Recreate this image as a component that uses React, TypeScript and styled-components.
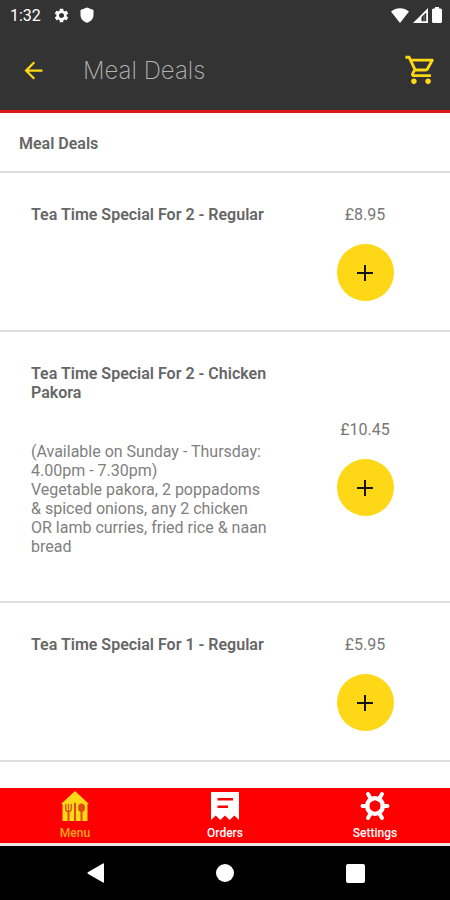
import React from "react";
import styled, { createGlobalStyle } from "styled-components";
import { MdArrowBack, MdOutlineShoppingCart, MdSettings } from "react-icons/md";

const GlobalStyle = createGlobalStyle`
  *, *::before, *::after { box-sizing: border-box; }
  body { margin: 0; background: #fff; font-family: Roboto, "Liberation Sans", sans-serif; }
  h1, h2, h3, p, ul { margin: 0; padding: 0; }
  ul { list-style: none; }
  button { border: 0; padding: 0; background: none; font: inherit; cursor: pointer; }
  svg { display: block; }
`;

const Screen = styled.div`
  min-height: 100vh;
  display: flex;
  flex-direction: column;
`;

const Header = styled.header`
  background: #333;
  border-bottom: 3px solid #dd1717;
`;

const StatusBar = styled.div`
  height: 30px;
  padding: 0 8px 0 10px;
  display: flex;
  align-items: center;
  justify-content: space-between;
  color: #fff;
  font-size: 16px;
`;

const StatusGroup = styled.div<{ $gap: number }>`
  display: flex;
  align-items: center;
  gap: ${(p) => p.$gap}px;
`;

const Clock = styled.span`
  margin-right: 2px;
`;

const AppBar = styled.div`
  height: 80px;
  padding: 0 12px 0 20px;
  display: flex;
  align-items: center;
`;

const IconButton = styled.button`
  color: #fdd817;
`;

const Title = styled.h1`
  flex: 1;
  margin-left: 36px;
  font-family: Inter, Lato, sans-serif;
  font-size: 24px;
  font-weight: 200;
  color: #b4b4b4;
`;

const Content = styled.main`
  flex: 1;
`;

const SectionTitle = styled.h2`
  padding: 21px 19px 18px;
  border-bottom: 2px solid #dedede;
  font-size: 16px;
  line-height: 19px;
  font-weight: 600;
  color: #666;
`;

const MealRow = styled.li`
  display: grid;
  grid-template-columns: 1fr 170px;
  align-items: center;
  padding: 32px 0 29px 31px;
  border-bottom: 2px solid #dedede;
`;

const MealText = styled.div`
  align-self: start;
  padding-right: 10px;
  font-size: 16px;
  line-height: 19px;
`;

const MealName = styled.h3`
  font-size: 16px;
  font-weight: 600;
  color: #666;
`;

const Description = styled.p`
  margin: 40px 0 16px;
  color: #808080;
  white-space: pre-line;
`;

const Purchase = styled.div`
  display: flex;
  flex-direction: column;
  align-items: center;
  gap: 20px;
`;

const Price = styled.span`
  font-size: 16px;
  line-height: 19px;
  color: #777;
`;

const AddButton = styled.button`
  width: 57px;
  height: 57px;
  border-radius: 50%;
  background: #fed717;
  display: grid;
  place-items: center;
`;

const TabBar = styled.nav`
  display: grid;
  grid-template-columns: repeat(3, 1fr);
  height: 58px;
  background: #f00;
  border-bottom: 3px solid #f5e4e4;
`;

const Tab = styled.button`
  display: flex;
  flex-direction: column;
  align-items: center;
  gap: 5px;
  padding-top: 3px;
  font-size: 12px;
  line-height: 14px;
`;

const TabLabel = styled.span<{ $active?: boolean }>`
  color: ${(p) => (p.$active ? "#ffa51c" : "#fff")};
  font-weight: 500;
`;

const SystemBar = styled.nav`
  height: 54px;
  padding: 0 30px;
  background: #000;
  display: grid;
  grid-template-columns: repeat(3, 1fr);
`;

const SystemButton = styled.button`
  display: grid;
  place-items: center;
`;

const ShieldIcon = () => (
  <svg width="14" height="16" viewBox="0 0 14 16" fill="#fff">
    <path d="M7 0.5 13.5 3V8C13.5 11.5 11 14.5 7 15.8 3 14.5 0.5 11.5 0.5 8V3Z" />
  </svg>
);

const WifiIcon = () => (
  <svg width="18" height="15" viewBox="0 0 18 15" fill="#fff">
    <path d="M0 3.5C5-1 13-1 18 3.5L9 15Z" />
  </svg>
);

const SignalIcon = () => (
  <svg width="15" height="15" viewBox="0 0 15 15">
    <path fill="#fff" fillRule="evenodd" d="M15 0V15H0ZM13.2 4.5 8.5 9V13.3H13.2Z" />
    <path fill="#fff" d="M10.4 8 11.8 6.6V13.3H10.4Z" opacity="0.25" />
  </svg>
);

const BatteryIcon = () => (
  <svg width="10" height="16" viewBox="0 0 10 16" fill="#fff">
    <path d="M3 0H7V1.5H8.5Q10 1.5 10 3V14.5Q10 16 8.5 16H1.5Q0 16 0 14.5V3Q0 1.5 1.5 1.5H3Z" />
  </svg>
);

const PlusIcon = () => (
  <svg width="16" height="16" viewBox="0 0 16 16" stroke="#15130a" strokeWidth="2">
    <path d="M8 0V16M0 8H16" />
  </svg>
);

const MenuIcon = () => (
  <svg width="28" height="30" viewBox="0 0 28 30">
    <path fill="#fed817" d="M14 0 28 13H26.5V30H1.5V13H0Z" />
    <g fill="none" stroke="#e04a10" strokeLinecap="round">
      <path strokeWidth="1.3" d="M4.7 13.5V18M7.5 13.5V18M10.3 13.5V18M4.7 18Q4.7 20.5 7.5 20.5 10.3 20.5 10.3 18" />
      <path strokeWidth="2" d="M7.5 20V30M14 12.5V30M20.5 20V30" />
    </g>
    <ellipse cx="20.5" cy="16.8" rx="3.4" ry="4.3" fill="#e04a10" />
  </svg>
);

const OrdersIcon = () => (
  <svg width="28" height="30" viewBox="0 0 28 30">
    <path fill="#fff" d="M0 1H28V29L23.3 24.5 18.7 29 14 24.5 9.3 29 4.7 24.5 0 29Z" />
    <path stroke="#f00" strokeWidth="2.6" d="M6.5 8.3H22M6.5 15.8H17" />
  </svg>
);

const SettingsIcon = () => (
  <svg width="30" height="30" viewBox="0 0 30 30">
    <g stroke="#fff" strokeWidth="4" strokeLinecap="round">
      <path d="M2.5 15H27.5M8 3 22 27M22 3 8 27" />
    </g>
    <circle cx="15" cy="15" r="7.8" fill="none" stroke="#fff" strokeWidth="4.6" />
    <circle cx="15" cy="15" r="5.5" fill="#f00" />
  </svg>
);

interface Meal {
  name: string;
  price: string;
  description?: string;
}

const meals: Meal[] = [
  { name: "Tea Time Special For 2 - Regular", price: "£8.95" },
  {
    name: "Tea Time Special For 2 - Chicken Pakora",
    price: "£10.45",
    description:
      "(Available on Sunday - Thursday: 4.00pm - 7.30pm)\nVegetable pakora, 2 poppadoms & spiced onions, any 2 chicken OR lamb curries, fried rice & naan bread",
  },
  { name: "Tea Time Special For 1 - Regular", price: "£5.95" },
];

const tabs = [
  { label: "Menu", Icon: MenuIcon, active: true },
  { label: "Orders", Icon: OrdersIcon, active: false },
  { label: "Settings", Icon: SettingsIcon, active: false },
];

export default function App() {
  return (
    <Screen>
      <GlobalStyle />
      <Header>
        <StatusBar>
          <StatusGroup $gap={10}>
            <Clock>1:32</Clock>
            <MdSettings size={17} />
            <ShieldIcon />
          </StatusGroup>
          <StatusGroup $gap={4}>
            <WifiIcon />
            <SignalIcon />
            <BatteryIcon />
          </StatusGroup>
        </StatusBar>
        <AppBar>
          <IconButton aria-label="Back">
            <MdArrowBack size={27} />
          </IconButton>
          <Title>Meal Deals</Title>
          <IconButton aria-label="Basket">
            <MdOutlineShoppingCart size={34} />
          </IconButton>
        </AppBar>
      </Header>
      <Content>
        <SectionTitle>Meal Deals</SectionTitle>
        <ul>
          {meals.map((meal) => (
            <MealRow key={meal.name}>
              <MealText>
                <MealName>{meal.name}</MealName>
                {meal.description && <Description>{meal.description}</Description>}
              </MealText>
              <Purchase>
                <Price>{meal.price}</Price>
                <AddButton aria-label={`Add ${meal.name}`}>
                  <PlusIcon />
                </AddButton>
              </Purchase>
            </MealRow>
          ))}
        </ul>
      </Content>
      <TabBar>
        {tabs.map(({ label, Icon, active }) => (
          <Tab key={label}>
            <Icon />
            <TabLabel $active={active}>{label}</TabLabel>
          </Tab>
        ))}
      </TabBar>
      <SystemBar>
        <SystemButton aria-label="Back">
          <svg width="17" height="20" viewBox="0 0 17 20" fill="#fff">
            <path d="M16 0.5Q17 0 17 1V19Q17 20 16 19.5L0.8 10.8Q0 10 0.8 9.2Z" />
          </svg>
        </SystemButton>
        <SystemButton aria-label="Home">
          <svg width="18" height="18" viewBox="0 0 18 18" fill="#fff">
            <circle cx="9" cy="9" r="9" />
          </svg>
        </SystemButton>
        <SystemButton aria-label="Recent apps">
          <svg width="19" height="19" viewBox="0 0 19 19" fill="#fff">
            <rect width="19" height="19" rx="2" />
          </svg>
        </SystemButton>
      </SystemBar>
    </Screen>
  );
}
